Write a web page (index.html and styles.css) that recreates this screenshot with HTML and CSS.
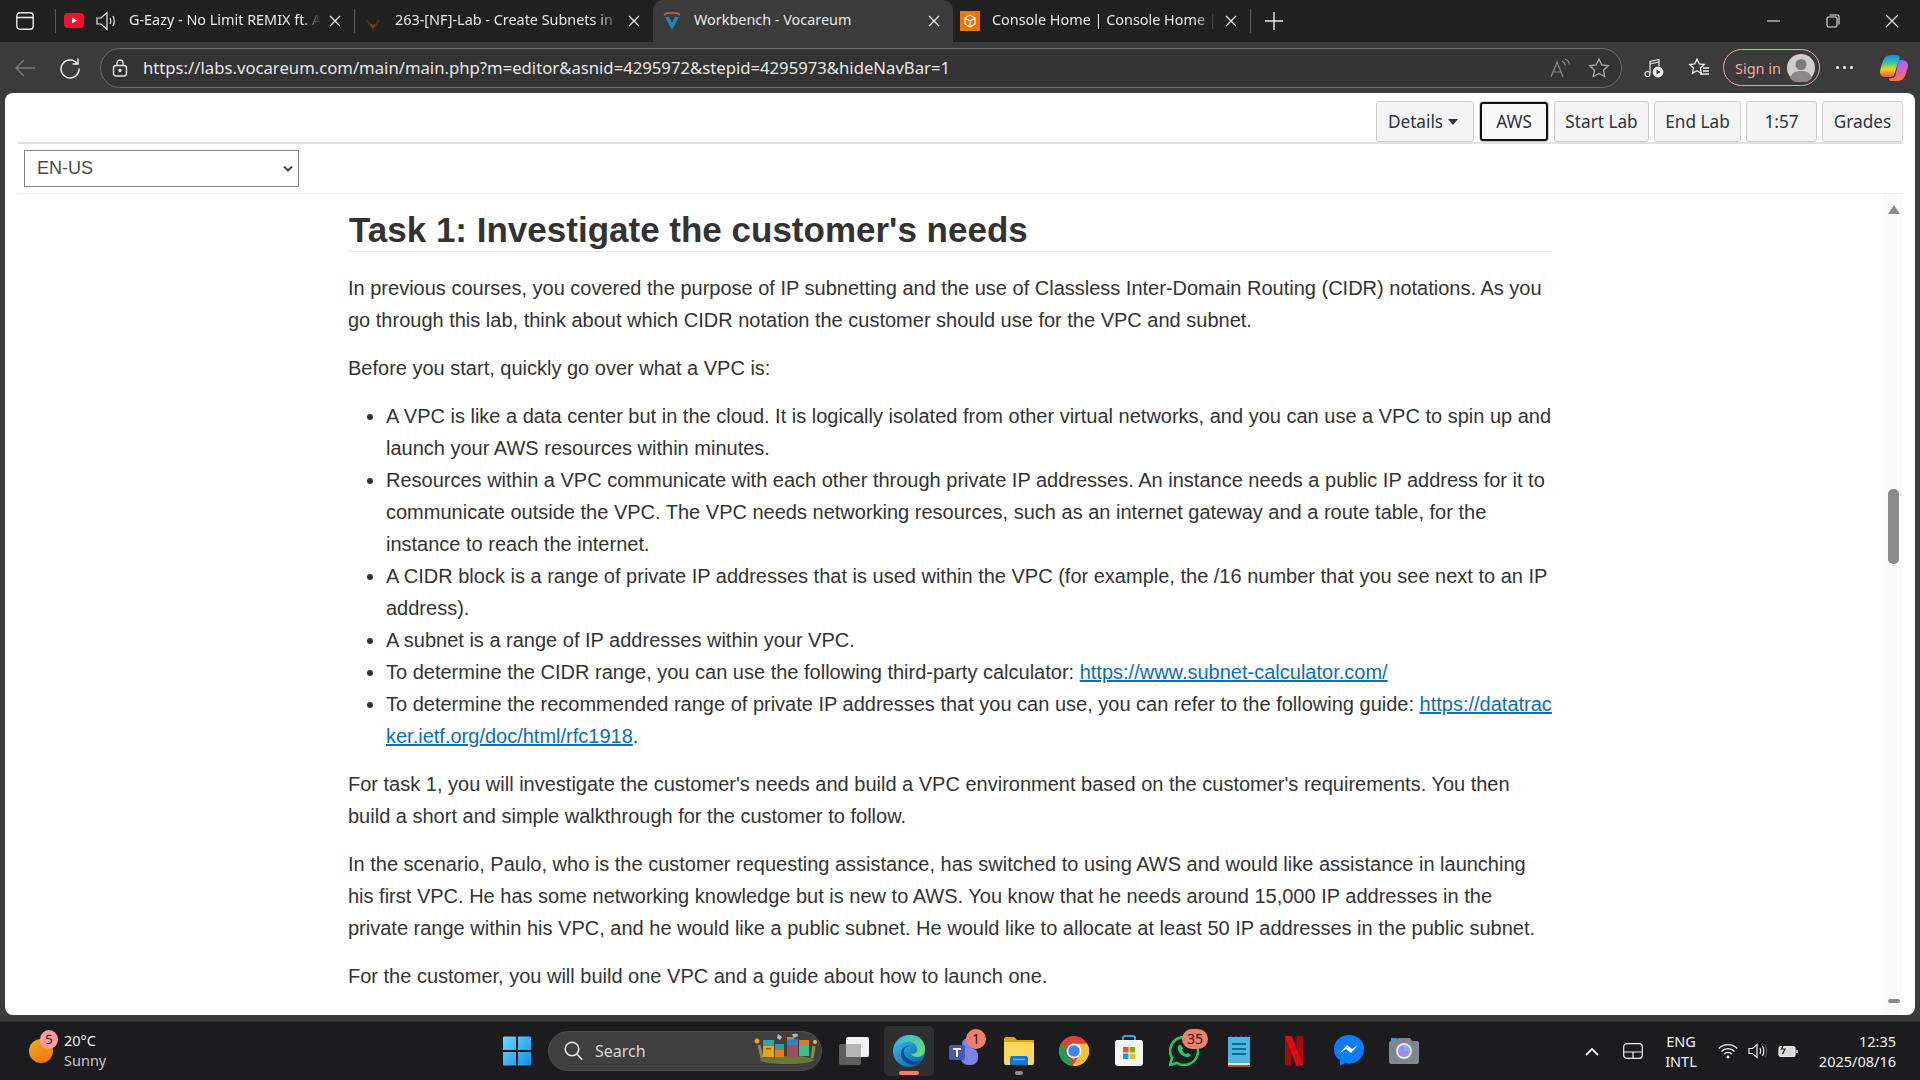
FILE: index.html
```html
<!DOCTYPE html>
<html lang="en">
<head>
  <meta charset="UTF-8" />
  <title>Workbench - Vocareum</title>
  <link rel="stylesheet" href="styles.css">
</head>
<body>

  <!-- Tab strip -->
  <div class="tabstrip">
    <div class="sidebar-btn">
      <svg width="18" height="18" viewBox="0 0 18 18" fill="none" stroke="#e8e8e8" stroke-width="1.4"><rect x=".8" y=".8" width="16.400" height="16.400" rx="3"/><path d="M.8 5.500h16.400" stroke-width="1.600"/></svg>
    </div>
    <div class="tab-sep"></div>
    <div class="tab">
      <svg class="favicon" width="20" height="20" viewBox="0 0 20 20"><rect y="2" width="20" height="15" rx="4" fill="#f40f2f"/><path d="M8 6.500l5 3-5 3z" fill="#fff"/></svg>
      <svg class="speaker" width="20" height="20" viewBox="0 0 20 20" fill="none" stroke="#e4e4e4" stroke-width="1.200"><path d="M1 7h4l6-5.500v17L5 13H1z"/><path d="M14 7c1 2 1 4 0 6M17 5c1.500 3 1.500 7 0 10"/></svg>
      <span class="tab-title">G-Eazy - No Limit REMIX ft. A</span>
      <svg class="close" width="20" height="20" viewBox="0 0 20 20" stroke="#e8e8e8" stroke-width="1.300"><path d="M5 5l10 10M15 5L5 15"/></svg>
    </div>
    <div class="tab-sep"></div>
    <div class="tab tab-wide">
      <svg class="favicon" width="20" height="20" viewBox="0 0 20 20" fill="none"><path d="M4 9l6 9 6-9" stroke="#4a3313" stroke-width="2"/><path d="M8 13l2 3 2-3" stroke="#6e4b16" stroke-width="1.400"/></svg>
      <span class="tab-title">263-[NF]-Lab - Create Subnets in</span>
      <svg class="close" width="20" height="20" viewBox="0 0 20 20" stroke="#e8e8e8" stroke-width="1.300"><path d="M5 5l10 10M15 5L5 15"/></svg>
    </div>
    <div class="tab tab-active">
      <svg class="favicon" width="20" height="20" viewBox="0 0 20 20" fill="none"><path d="M3 6l7 13 7-13h-4l-3 6-3-6z" fill="#1b87b8"/><path d="M2 4c3-3 13-3 16 0" stroke="#d96b33" stroke-width="1.300"/></svg>
      <span class="tab-title tab-title-full">Workbench - Vocareum</span>
      <svg class="close" width="20" height="20" viewBox="0 0 20 20" stroke="#e8e8e8" stroke-width="1.300"><path d="M5 5l10 10M15 5L5 15"/></svg>
    </div>
    <div class="tab tab-last">
      <svg class="favicon" width="20" height="20" viewBox="0 0 20 20" fill="none"><rect width="20" height="20" y="0" fill="#f07304"/><path d="M10 4l5 3v6l-5 3-5-3V7zM5 7l5 3 5-3M10 10v6" stroke="#fff" stroke-width="1.100"/></svg>
      <span class="tab-title">Console Home | Console Home | u</span>
      <svg class="close" width="20" height="20" viewBox="0 0 20 20" stroke="#e8e8e8" stroke-width="1.300"><path d="M5 5l10 10M15 5L5 15"/></svg>
    </div>
    <div class="tab-sep"></div>
    <svg class="new-tab" width="18" height="18" viewBox="0 0 18 18" stroke="#e8e8e8" stroke-width="1.400"><path d="M9 0v18M0 9h18"/></svg>
    <div class="win-controls">
      <svg width="14" height="14" viewBox="0 0 14 14" stroke="#e8e8e8" stroke-width="1.100"><path d="M0 7h13"/></svg>
      <svg width="14" height="14" viewBox="0 0 14 14" fill="none" stroke="#e8e8e8" stroke-width="1.100"><rect x="1" y="3" width="10" height="10" rx="1.500"/><path d="M3.500 1h8a1.500 1.500 0 0 1 1.500 1.500v8"/></svg>
      <svg width="14" height="14" viewBox="0 0 14 14" stroke="#e8e8e8" stroke-width="1.100"><path d="M1 1l12 12M13 1L1 13"/></svg>
    </div>
  </div>

  <!-- Address bar -->
  <div class="toolbar">
    <svg class="nav-back" width="20" height="20" viewBox="0 0 20 20" fill="none" stroke="#7b7b7b" stroke-width="1.400"><path d="M20 10H1M9 2l-8 8 8 8"/></svg>
    <svg class="nav-reload" width="22" height="22" viewBox="0 0 22 22" fill="none" stroke="#ececec" stroke-width="1.500"><path d="M18.500 7A9 9 0 1 0 20 11.500"/><path d="M19 1.500V7h-5.500"/></svg>
    <div class="urlbar">
      <svg width="16" height="18" viewBox="0 0 16 18" fill="none" stroke="#e8e8e8" stroke-width="1.300"><rect x="1.500" y="6.500" width="13" height="10.500" rx="2.500"/><path d="M5 6.500V4a3 3 0 0 1 6 0v2.500"/><circle cx="8" cy="11.500" r="1" fill="#e8e8e8"/></svg>
      <span class="url">https://labs.vocareum.com/main/main.php?m=editor&amp;asnid=4295972&amp;stepid=4295973&amp;hideNavBar=1</span>
      <svg class="read-aloud" width="22" height="20" viewBox="0 0 22 20" fill="none" stroke="#8e8e8e" stroke-width="1.200"><path d="M1 19L7 4l6 15M3.500 14h7"/><path d="M12 3c2 1 3 2.500 3.500 4.500M15 1c2.500 1 4 3 4.500 5.500"/></svg>
      <svg class="star" width="22" height="22" viewBox="0 0 22 22" fill="none" stroke="#a8a8a8" stroke-width="1.300"><path d="M11 2l2.800 6 6.500.8-4.800 4.400 1.300 6.400L11 16.400l-5.800 3.200 1.300-6.400L1.700 8.800 8.200 8z"/></svg>
    </div>
    <svg class="tool-music" width="20" height="22" viewBox="0 0 20 22" fill="none" stroke="#ececec" stroke-width="1.200"><path d="M6 16V4.500l9-2V9"/><path d="M6 7l9-2"/><circle cx="3.500" cy="17" r="2.500"/><circle cx="14" cy="15" r="4.800" fill="#ececec"/><path d="M12.500 12.500l4 2.500-4 2.500z" fill="#3b3b3b" stroke="none"/></svg>
    <svg class="tool-favs" width="22" height="22" viewBox="0 0 22 22" fill="none" stroke="#ececec" stroke-width="1.300"><path d="M9 2l2.200 5 5 .6-3.800 3.500 1 5.100L9 13.700l-4.500 2.500 1-5.100L1.700 7.600l5-.6z"/><path d="M15 11h6M15 14h6M12 17h9"/></svg>
    <div class="signin">
      <span>Sign in</span>
      <svg width="28" height="28" viewBox="0 0 28 28"><circle cx="14" cy="14" r="14" fill="#cfcdc9"/><circle cx="14" cy="10.500" r="5.500" fill="#7c7a76"/><path d="M3 24c2-6 6-7 11-7s9 1 11 7a14 14 0 0 1-22 0z" fill="#8b8985"/></svg>
    </div>
    <div class="more-dots"><i></i><i></i><i></i></div>
    <svg class="copilot" width="28" height="26" viewBox="0 0 28 26">
      <defs>
        <linearGradient id="copA" x1="0" y1="0" x2="0" y2="1"><stop offset="0" stop-color="#1f7ff0"/><stop offset=".35" stop-color="#2fc8a0"/><stop offset=".65" stop-color="#f2d21c"/><stop offset="1" stop-color="#f2553a"/></linearGradient>
        <linearGradient id="copB" x1="0" y1="0" x2=".3" y2="1"><stop offset="0" stop-color="#5a78f5"/><stop offset=".5" stop-color="#c95fe0"/><stop offset=".8" stop-color="#f0609a"/><stop offset="1" stop-color="#f9842c"/></linearGradient>
      </defs>
      <path d="M11 0h6c1.500 0 2.500 1 2.800 2.500L14 20c-.5 1.500-1.500 2-3 2H5c-3 0-5-2.500-5-5 0-2 1-5 2-8 1.200-4 3-9 9-9z" fill="url(#copA)"/>
      <path d="M19 5h3c3.500 0 6 2.500 6 5.500 0 2-1 4.500-2 7.500-1.300 4-3 8-8.500 8H11c-1.500 0-2.200-1-2-2.500l3-.5c2 0 3-1 3.500-3z" fill="url(#copB)"/>
    </svg>
  </div>

  <!-- Page -->
  <div class="page">
    <div class="lab-bar">
      <button class="lab-btn btn-details">Details<i class="caret"></i></button>
      <button class="lab-btn btn-aws">AWS</button>
      <button class="lab-btn btn-start">Start Lab</button>
      <button class="lab-btn btn-end">End Lab</button>
      <button class="lab-btn btn-time">1:57</button>
      <button class="lab-btn btn-grades">Grades</button>
    </div>
    <div class="lang-bar">
      <select class="lang-select" aria-label="Language">
        <option>EN-US</option>
      </select>
    </div>
    <div class="reader">
      <div class="article">
        <h2>Task 1: Investigate the customer's needs</h2>
        <p>In previous courses, you covered the purpose of IP subnetting and the use of Classless Inter-Domain Routing (CIDR) notations. As you go through this lab, think about which CIDR notation the customer should use for the VPC and subnet.</p>
        <p>Before you start, quickly go over what a VPC is:</p>
        <ul>
          <li>A VPC is like a data center but in the cloud. It is logically isolated from other virtual networks, and you can use a VPC to spin up and launch your AWS resources within minutes.</li>
          <li>Resources within a VPC communicate with each other through private IP addresses. An instance needs a public IP address for it to communicate outside the VPC. The VPC needs networking resources, such as an internet gateway and a route table, for the instance to reach the internet.</li>
          <li>A CIDR block is a range of private IP addresses that is used within the VPC (for example, the /16 number that you see next to an IP address).</li>
          <li>A subnet is a range of IP addresses within your VPC.</li>
          <li>To determine the CIDR range, you can use the following third-party calculator: <a href="#">https://www.subnet-calculator.com/</a></li>
          <li>To determine the recommended range of private IP addresses that you can use, you can refer to the following guide: <a href="#">https://datatrac</a><br><a href="#">ker.ietf.org/doc/html/rfc1918</a>.</li>
        </ul>
        <p>For task 1, you will investigate the customer's needs and build a VPC environment based on the customer's requirements. You then build a short and simple walkthrough for the customer to follow.</p>
        <p>In the scenario, Paulo, who is the customer requesting assistance, has switched to using AWS and would like assistance in launching his first VPC. He has some networking knowledge but is new to AWS. You know that he needs around 15,000 IP addresses in the private range within his VPC, and he would like a public subnet. He would like to allocate at least 50 IP addresses in the public subnet.</p>
        <p>For the customer, you will build one VPC and a guide about how to launch one.</p>
      </div>
      <div class="scrollbar">
        <i class="arrow-up"></i>
        <i class="thumb"></i>
        <i class="arrow-down"></i>
      </div>
    </div>
  </div>

  <!-- Taskbar -->
  <div class="taskbar">
    <div class="weather">
      <div class="weather-icon"><span class="badge-five">5</span></div>
      <div class="weather-text">
        <span>20°C</span>
        <span class="weather-sub">Sunny</span>
      </div>
    </div>
    <div class="task-cell">
      <svg width="30" height="30" viewBox="0 0 30 30"><defs><linearGradient id="winG" x1="0" y1="0" x2="1" y2="1"><stop offset="0" stop-color="#6fd6fb"/><stop offset="1" stop-color="#0f8fee"/></linearGradient></defs><path d="M1 2c0-1 .500-1.500 1.500-1.500H14V14H1zM16 .500h11.500c1 0 1.500.500 1.500 1.500V14H16zM1 16h13v13.500H2.500C1.500 29.500 1 29 1 28zM16 16h13v12c0 1-.500 1.500-1.500 1.500H16z" fill="url(#winG)"/></svg>
    </div>
    <div class="search-pill">
      <svg width="20" height="20" viewBox="0 0 20 20" fill="none" stroke="#e8e8e8" stroke-width="1.600"><circle cx="8" cy="8" r="6.800"/><path d="M12.800 13l5.500 5.800"/></svg>
      <span>Search</span>
      <svg class="search-art" width="66" height="34" viewBox="0 0 66 34">
        <ellipse cx="33" cy="26" rx="27" ry="4" fill="#6b7636"/>
        <path d="M5 11l3 13M60 12l-2 12" stroke="#8f8f3a" stroke-width="3"/>
        <circle cx="3" cy="7" r="2.500" fill="#e6a323"/><circle cx="61" cy="8" r="2" fill="#e8c341"/>
        <rect x="9" y="6" width="11" height="17" fill="#e9a60d"/><rect x="9" y="6" width="11" height="6" fill="#2fa79e"/><rect x="12" y="14" width="5" height="1.500" fill="#8a5a12"/>
        <rect x="21" y="10" width="9" height="13" fill="#e67d13"/><rect x="21" y="10" width="9" height="6" fill="#2d9ca8"/>
        <rect x="33" y="5" width="11" height="18" fill="#a04a62"/><rect x="33" y="5" width="11" height="6" fill="#2a86c2"/><rect x="33" y="3" width="7" height="2.500" fill="#d27b25"/>
        <rect x="45" y="6" width="10" height="16" fill="#37c093"/><rect x="45" y="6" width="10" height="5" fill="#e0791f"/>
        <path d="M24 0l4 3-2 3-3-2zM38 0l5-2 1 4-4 2z" fill="#b9bac4"/>
      </svg>
    </div>
    <div class="task-apps">
      <div class="app">
        <svg width="30" height="30" viewBox="0 0 30 30"><rect x="0" y="8" width="22" height="21" rx="2" fill="#5e5e5e"/><rect x="7" y="1" width="23" height="20" rx="2" fill="#f2f2f2"/><rect x="7" y="8" width="15" height="13" fill="#b5b5b5"/></svg>
      </div>
      <div class="app app-active">
        <svg width="32" height="32" viewBox="0 0 32 32"><defs><linearGradient id="edgeA" x1="0" y1="0" x2="1" y2="1"><stop offset="0" stop-color="#35c1f1"/><stop offset="1" stop-color="#0c59a4"/></linearGradient><linearGradient id="edgeB" x1="0" y1="0" x2="1" y2="1"><stop offset="0" stop-color="#37b7e8"/><stop offset="1" stop-color="#6fe05a"/></linearGradient></defs><circle cx="16" cy="16" r="16" fill="url(#edgeA)"/><path d="M3 11C6 3 13 0 18 0c8 0 14 6 14 14 0 5-3 8-8 8-3 0-5-1-6-3 5 0 7-3 6-6-1-4-5-7-10-6-5 0-9 2-11 4z" fill="url(#edgeB)"/><path d="M11 17c0-4 3-6 6-6-5-1-9 3-9 8 0 6 5 10 12 11 3 0 7-2 9-5-3 2-8 2-12 0-4-2-6-5-6-8z" fill="#114a8b"/></svg>
        <i class="run-dot run-dot-active"></i>
      </div>
      <div class="app">
        <svg width="32" height="32" viewBox="0 0 32 32"><circle cx="20" cy="9" r="6" fill="#7b83eb"/><rect x="13" y="13" width="17" height="17" rx="7" fill="#7b83eb"/><rect x="1" y="10" width="16" height="15" rx="2" fill="#4b53bc"/><path d="M5 14h8M9 14v8" stroke="#fff" stroke-width="2"/></svg>
        <span class="app-badge">1</span>
      </div>
      <div class="app">
        <svg width="30" height="30" viewBox="0 0 30 30"><path d="M0 3c0-1 1-2 2-2h8l3 3h17v6H0z" fill="#e0a30e"/><path d="M0 6h28c1 0 2 1 2 2v19c0 1-1 2-2 2H2c-1 0-2-1-2-2z" fill="#fbd75b"/><path d="M6 29v-7c0-1 1-2 2-2h14c1 0 2 1 2 2v7z" fill="#0f78d4"/><path d="M9 23.500h12" stroke="#5fb6f2" stroke-width="1.500"/></svg>
        <i class="run-dot"></i>
      </div>
      <div class="app">
        <svg width="30" height="30" viewBox="0 0 30 30"><circle cx="15" cy="15" r="15" fill="#dc4437"/><path d="M8.900 18.500L13.500 30A15 15 0 0 1 2 7.500z" fill="#1f9d55"/><path d="M15 8L28 7.500A15 15 0 0 1 13.500 30L21 19z" fill="#fbc02d"/><circle cx="15" cy="15" r="7.400" fill="#fff"/><circle cx="15" cy="15" r="5.800" fill="#3f86f0"/></svg>
      </div>
      <div class="app">
        <svg width="30" height="32" viewBox="0 0 30 32"><path d="M9 6V3c0-1 1-2 2-2h8c1 0 2 1 2 2v3" fill="none" stroke="#28a8e0" stroke-width="2"/><path d="M1 7c0-1 1-2 2-2h24c1 0 2 1 2 2v21c0 2-1 3-3 3H4c-2 0-3-1-3-3z" fill="#f5f5f5"/><rect x="9" y="12" width="5.500" height="5.500" fill="#f25022"/><rect x="15.500" y="12" width="5.500" height="5.500" fill="#7fba00"/><rect x="9" y="18.500" width="5.500" height="5.500" fill="#00a4ef"/><rect x="15.500" y="18.500" width="5.500" height="5.500" fill="#ffb900"/></svg>
      </div>
      <div class="app">
        <svg width="30" height="30" viewBox="0 0 30 30" fill="none"><path d="M1 29l2-7A14 14 0 1 1 8 27z" stroke="#25c466" stroke-width="2.600"/><path d="M10 9c-1 1-2 3-1 5 2 4 4 6 8 7 2 .500 4-.500 5-2l-3-2-2 1c-2-1-3-2-4-4l1-2-2-3z" fill="#25c466"/></svg>
        <span class="app-badge app-badge-wide">35</span>
      </div>
      <div class="app">
        <svg width="22" height="32" viewBox="0 0 22 32"><rect x="0" y="2" width="22" height="26" fill="#4ab7de"/><rect x="0" y="28" width="22" height="2" fill="#e6e2d6"/><rect x="0" y="30" width="22" height="2" fill="#a3562a"/><path d="M2 2l1-2 1 2zM7 2l1-2 1 2zM12 2l1-2 1 2zM17 2l1-2 1 2z" fill="#0b6a8f"/><path d="M4 9h14M4 14h14M4 19h14" stroke="#0b6a8f" stroke-width="2"/></svg>
      </div>
      <div class="app">
        <svg width="18" height="30" viewBox="0 0 18 30"><path d="M0 0h6.500v30L0 29z" fill="#a10a12"/><path d="M11.500 0H18v29l-6.500 1z" fill="#a10a12"/><path d="M0 0h6.500L18 29l-6.500 1z" fill="#e50914"/></svg>
      </div>
      <div class="app">
        <svg width="30" height="32" viewBox="0 0 30 32"><path d="M15 0C7 0 0 6 0 14c0 5 2 9 6 11v6l5-3c1 .300 3 .500 4 .500 8 0 15-6 15-14.500S23 0 15 0z" fill="#0a7cff"/><path d="M6 18l7-8 5 4 6-4-7 8-5-4z" fill="#fff"/></svg>
      </div>
      <div class="app">
        <svg width="30" height="26" viewBox="0 0 30 26"><rect x="2" y="0" width="6" height="4" fill="#2a9fd8"/><path d="M0 5c0-1 1-2 2-2h5l2-3h12l2 3h5c1 0 2 1 2 2v19c0 1-1 2-2 2H2c-1 0-2-1-2-2z" fill="#7e868e"/><circle cx="15" cy="13" r="8" fill="#e4e6e8"/><circle cx="15" cy="13" r="6" fill="#a489e6"/><path d="M15 7a6 6 0 0 1 6 6h-6z" fill="#79b8ee"/></svg>
      </div>
    </div>
    <div class="tray">
      <svg class="tray-chevron" width="14" height="9" viewBox="0 0 14 9" fill="none" stroke="#eee" stroke-width="1.800"><path d="M1 8l6-6 6 6"/></svg>
      <svg class="tray-pad" width="20" height="16" viewBox="0 0 20 16" fill="none" stroke="#eee" stroke-width="1.200"><rect x=".7" y=".7" width="18.600" height="14.600" rx="3"/><path d="M.7 9h18.600M10 9v6.300"/></svg>
      <div class="tray-lang"><span>ENG</span><span>INTL</span></div>
      <svg class="tray-wifi" width="20" height="16" viewBox="0 0 20 16" fill="none" stroke="#eee" stroke-width="1.300"><path d="M.8 5.500a13 13 0 0 1 18.400 0M3.500 8.500a9 9 0 0 1 13 0M6.200 11.200a5 5 0 0 1 7.600 0"/><circle cx="10" cy="14" r="1.400" fill="#eee" stroke="none"/></svg>
      <svg class="tray-vol" width="20" height="16" viewBox="0 0 20 16" fill="none" stroke="#eee" stroke-width="1.200"><path d="M1 5.500h3.500L9 1.500v13l-4.500-4H1z"/><path d="M12 5c1 2 1 4 0 6M14.500 3c1.500 3 1.500 7 0 10"/><path d="M17 1.500c2 4 2 9 0 13" stroke="#555"/></svg>
      <svg class="tray-bat" width="20" height="16" viewBox="0 0 20 16" fill="none" stroke="#eee" stroke-width="1.200"><rect x="1" y="3.500" width="16" height="10" rx="2" fill="#eee" fill-opacity=".9"/><path d="M19 7v3" stroke-width="1.600"/><path d="M6 .500L3.500 6H7L4.500 11" stroke="#1c1c1c"/></svg>
      <div class="tray-clock"><span>12:35</span><span>2025/08/16</span></div>
    </div>
  </div>

</body>
</html>
```

FILE: styles.css
```css
/* Reset */
* {
  box-sizing: border-box;
}

html, body {
  height: 100%;
}

body {
  margin: 0;
  height: 1080px;
  overflow: hidden;
  display: flex;
  flex-direction: column;
  background: #3b3b3b;
  font-family: 'Noto Sans', 'Open Sans', sans-serif;
  color: #eee;
}

svg {
  flex-shrink: 0;
  display: block;
}

/* Tab strip */
.tabstrip {
  height: 42px;
  flex: none;
  display: flex;
  align-items: center;
  background: #202020;
}

.sidebar-btn {
  width: 55px;
  padding-left: 16px;
}

.tab-sep {
  width: 1px;
  height: 24px;
  background: #5a5a5a;
  flex: none;
}

.tab {
  width: 298px;
  height: 42px;
  flex: none;
  display: flex;
  align-items: center;
  padding: 0 9px 0 8px;
  font-size: 14.4px;
  color: #e8e8e8;
}

.tab-active {
  width: 300px;
  padding-left: 9px;
  background: #3b3b3b;
  border-radius: 10px 10px 0 0;
}

.tab-last {
  width: 297px;
  padding-left: 7px;
}

.favicon {
  margin-right: 12px;
}

.speaker {
  margin-right: 13px;
}

.tab-title {
  flex: 1;
  min-width: 0;
  padding-bottom: 3px;
  white-space: nowrap;
  -webkit-mask-image: linear-gradient(to right, #000 90%, transparent 100%);
  mask-image: linear-gradient(to right, #000 90%, transparent 100%);
}

.tab-title-full {
  -webkit-mask-image: none;
  mask-image: none;
}

.close {
  margin-left: 4px;
}

.new-tab {
  margin-left: 14px;
}

.win-controls {
  margin-left: auto;
  display: flex;
  gap: 45px;
  padding-right: 21px;
}

/* Address bar */
.toolbar {
  height: 51px;
  flex: none;
  display: flex;
  align-items: center;
  background: #3b3b3b;
}

.nav-back {
  margin-left: 15px;
}

.nav-reload {
  margin-left: 24px;
}

.urlbar {
  width: 1522px;
  height: 40px;
  margin-left: 19px;
  display: flex;
  align-items: center;
  padding: 0 11px 0 11px;
  background: #333;
  border: 1px solid #6a6a6a;
  border-radius: 20px;
}

.url {
  margin-left: 15px;
  font-size: 16.7px;
  color: #e6e6e6;
  flex: 1;
  white-space: nowrap;
}

.star {
  margin-left: 16px;
}

.tool-music {
  margin-left: 22px;
}

.tool-favs {
  margin-left: 24px;
}

.signin {
  width: 97px;
  height: 37px;
  margin-left: 13px;
  display: flex;
  align-items: center;
  justify-content: space-between;
  padding: 0 4px 0 11px;
  border: 1px solid #e9a8a0;
  border-radius: 19px;
  font-size: 14.5px;
  color: #efa9a0;
}

.more-dots {
  margin-left: 16px;
  display: flex;
  gap: 4px;
}

.more-dots i {
  width: 3px;
  height: 3px;
  border-radius: 50%;
  background: #eee;
}

.copilot {
  margin-left: 27px;
}

/* Page */
.page {
  height: 922px;
  flex: none;
  margin: 0 5px;
  display: flex;
  flex-direction: column;
  background: #fff;
  border-radius: 8px;
  color: #333;
}

.lab-bar {
  height: 51px;
  flex: none;
  margin: 0 12px 0 13px;
  display: flex;
  justify-content: flex-end;
  align-items: flex-start;
  padding-top: 8px;
  gap: 5px;
  border-bottom: 2px solid #dde2e8;
}

.lab-btn {
  height: 41px;
  padding: 0;
  font-family: 'Noto Sans', sans-serif;
  font-size: 17.2px;
  color: #2b3540;
  background: #f4f4f4;
  border: 1px solid #ccc;
  border-radius: 3px;
}

.btn-details { width: 98px; padding-right: 4px; }
.btn-aws {
  width: 70px;
  background: #f8f8f8;
  outline: 2px solid #111;
  outline-offset: -3px;
  border-radius: 4px;
}
.btn-start { width: 95px; }
.btn-end { width: 87px; }
.btn-time { width: 71px; }
.btn-grades { width: 81px; }

.caret {
  display: inline-block;
  margin-left: 5px;
  vertical-align: 3px;
  border-top: 6px solid #2b3540;
  border-left: 5.500px solid transparent;
  border-right: 5.500px solid transparent;
}

.lang-bar {
  height: 50px;
  flex: none;
  margin: 0 12px 0 13px;
  padding: 6px 0 0 6px;
  border-bottom: 1px solid #eee;
}

.lang-select {
  display: block;
  width: 275px;
  height: 37px;
  padding: 0 0 2px 12px;
  appearance: none;
  font-family: 'Liberation Sans', sans-serif;
  font-size: 18px;
  color: #4a4a4a;
  background: #fff url("data:image/svg+xml,%3Csvg xmlns='http://www.w3.org/2000/svg' width='12' height='8' fill='none' stroke='%23444' stroke-width='2'%3E%3Cpath d='M2 1.500l4 4 4-4'/%3E%3C/svg%3E") no-repeat right 4px center;
  border: 1px solid #888;
  border-radius: 0;
}

.reader {
  flex: 1;
  min-height: 0;
  margin-right: 12px;
  padding-left: 343px;
  display: flex;
  justify-content: space-between;
  overflow: hidden;
}

.article {
  width: 1205px;
  flex: none;
  font-family: 'Liberation Sans', sans-serif;
  font-size: 20px;
  line-height: 32px;
}

.article h2 {
  margin: 16px 0 20px;
  padding-bottom: 1px;
  padding-left: 1px;
  font-size: 35px;
  line-height: 40px;
  font-weight: 700;
  color: #333;
  border-bottom: 1px solid #eaecef;
}

.article p {
  margin: 0 0 16px;
}

.article ul {
  margin: 0 0 16px;
  padding-left: 38px;
}

.article a {
  color: #0a6ebd;
}

.scrollbar {
  width: 19px;
  flex: none;
  display: flex;
  flex-direction: column;
  align-items: center;
  padding-top: 11px;
  background: #fafafa;
}

.arrow-up {
  border-bottom: 9px solid #8b8b8b;
  border-left: 6px solid transparent;
  border-right: 6px solid transparent;
}

.thumb {
  width: 11px;
  height: 75px;
  margin-top: 275px;
  border-radius: 5px;
  background: #8b8b8b;
}

.arrow-down {
  width: 12px;
  height: 4px;
  margin-top: 435px;
  border-radius: 2px;
  background: #8b8b8b;
}

/* Taskbar */
.taskbar {
  height: 59px;
  margin-top: 6px;
  flex: none;
  display: flex;
  align-items: center;
  background: #1c1c1e;
  border-top: 1px solid #2c2c2c;
  font-size: 14.5px;
  color: #f0f0f0;
}

.weather {
  width: 489px;
  padding-left: 29px;
  display: flex;
  align-items: center;
  gap: 11px;
}

.weather-icon {
  position: relative;
  width: 24px;
  height: 24px;
  border-radius: 50%;
  background: linear-gradient(160deg, #e9b221, #f4700f);
}

.badge-five {
  position: absolute;
  top: -9px;
  left: 11px;
  width: 18px;
  height: 19px;
  border-radius: 50%;
  background: #ff9aa2;
  color: #222;
  font-size: 13px;
  line-height: 19px;
  text-align: center;
}

.weather-text {
  display: flex;
  flex-direction: column;
  margin-top: -2px;
  line-height: 20px;
}

.weather-sub {
  color: #c8c8c8;
}

.task-cell {
  width: 55px;
  display: flex;
  justify-content: center;
}

.search-pill {
  width: 274px;
  height: 40px;
  margin-left: 4px;
  display: flex;
  align-items: center;
  padding-left: 15px;
  background: #3f3f3f;
  border: 1px solid #4e4e4e;
  border-radius: 20px;
  font-size: 16px;
  color: #d8d8d8;
}

.search-pill span {
  margin-left: 11px;
  flex: 1;
}

.search-art {
  margin-right: 1px;
}

.task-apps {
  margin-left: 4px;
  display: flex;
}

.app {
  position: relative;
  width: 55px;
  height: 50px;
  display: flex;
  align-items: center;
  justify-content: center;
}

.app-active::before {
  content: "";
  position: absolute;
  top: 0;
  bottom: 0;
  left: 3px;
  right: 2px;
  background: #2f2f2f;
  border-radius: 5px;
}

.app-active svg {
  position: relative;
}

.run-dot {
  position: absolute;
  bottom: 1px;
  left: 50%;
  width: 8px;
  height: 4px;
  margin-left: -4px;
  border-radius: 2px;
  background: #8f8f8f;
}

.run-dot-active {
  width: 20px;
  margin-left: -10px;
  background: #f0806a;
}

.app-badge {
  position: absolute;
  top: 3px;
  left: 30px;
  min-width: 20px;
  height: 20px;
  border-radius: 10px;
  background: #f0806a;
  color: #222;
  font-size: 14px;
  line-height: 20px;
  text-align: center;
}

.app-badge-wide {
  left: 26px;
  width: 26px;
}

.tray {
  margin-left: auto;
  padding-right: 24px;
  display: flex;
  align-items: center;
}

.tray-pad {
  margin-left: 24px;
}

.tray-lang {
  width: 44px;
  margin-left: 16px;
  display: flex;
  flex-direction: column;
  align-items: center;
  line-height: 20px;
}

.tray-wifi {
  margin-left: 15px;
}

.tray-vol {
  margin-left: 10px;
}

.tray-bat {
  margin-left: 10px;
}

.tray-clock {
  width: 98px;
  display: flex;
  flex-direction: column;
  align-items: flex-end;
  line-height: 20px;
}
```
